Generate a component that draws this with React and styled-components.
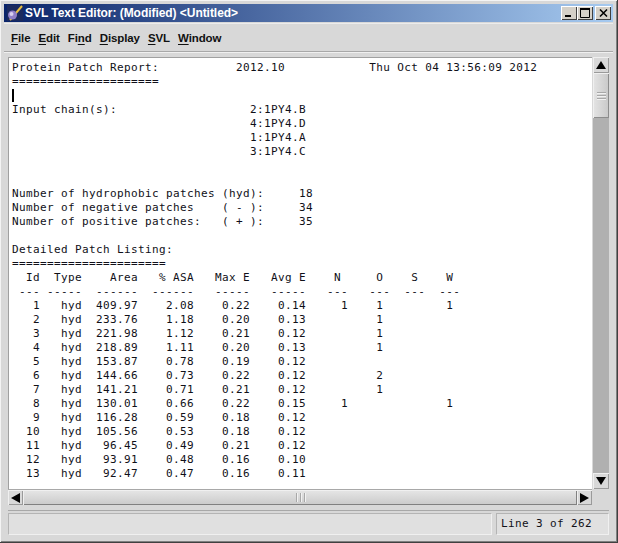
import { createGlobalStyle } from 'styled-components'
import styled from 'styled-components'

const GlobalStyle = createGlobalStyle`
  html, body {
    margin: 0;
    padding: 0;
    background: #d8d8d8;
  }
`

const Window = styled.div`
  width: 618px;
  height: 543px;
  box-sizing: border-box;
  display: flex;
  flex-direction: column;
  padding: 4px 4px 7px 4px;
  background: #d8d8d8;
  border-right: 1px solid #404040;
  border-bottom: 1px solid #404040;
  box-shadow: inset 1px 1px 0 #f4f4f4, inset -1px -1px 0 #808080;
`

const TitleBar = styled.div`
  height: 18px;
  flex: none;
  display: flex;
  align-items: center;
  padding: 0 2px 0 3px;
  background: linear-gradient(to right, #0a246a, #a6caf0);
`

const AppIcon = styled.svg`
  width: 16px;
  height: 16px;
  flex: none;
`

const Title = styled.div`
  flex: 1;
  margin-left: 2px;
  font: bold 12px 'Liberation Sans', sans-serif;
  letter-spacing: -0.05px;
  color: #fff;
  white-space: pre;
`

const CaptionButton = styled.div`
  width: 16px;
  height: 14px;
  margin-left: ${(props) => props.$gap || 0}px;
  background: #d4d0c8;
  box-shadow: inset 1px 1px 0 #fff, inset -1px -1px 0 #404040;
  display: flex;
  align-items: center;
  justify-content: center;
  svg {
    display: block;
  }
`

const MenuBar = styled.div`
  height: 29px;
  flex: none;
  display: flex;
  align-items: center;
  gap: 8px;
  padding: 0 0 0 7px;
  margin-top: 1px;
  border-top: 1px solid #ececec;
  border-bottom: 1px solid #a8a8a8;
  box-shadow: 0 1px 0 #f0f0f0;
  box-sizing: border-box;
`

const MenuItem = styled.div`
  font: bold 11.5px 'Liberation Sans', sans-serif;
  letter-spacing: -0.1px;
  color: #111;
  white-space: pre;
  span {
    text-decoration: underline;
    text-underline-offset: 2px;
  }
`

const Body = styled.div`
  flex: 1;
  min-height: 0;
  display: grid;
  grid-template-columns: 1fr 17px;
  grid-template-rows: 1fr 16px;
  margin: 5px 4px 0 4px;
  border-bottom: 1px solid #a8a8a8;
  padding-bottom: 5px;
`

const TextPane = styled.pre`
  margin: 0;
  overflow: hidden;
  background: #fff;
  border-top: 1px solid #a0a0a0;
  border-left: 1px solid #a0a0a0;
  padding: 3px 0 0 3px;
  font: 11px/14px 'DejaVu Sans Mono', monospace;
  letter-spacing: 0.38px;
  color: #101018;
  position: relative;
`

const Caret = styled.div`
  position: absolute;
  left: 3px;
  top: 31px;
  width: 2px;
  height: 13px;
  background: #000;
`

const VScroll = styled.div`
  display: flex;
  flex-direction: column;
  background: #b0b0b0;
  border-left: 1px solid #d8d8d8;
`

const HScroll = styled.div`
  display: flex;
  background: #c8c8c8;
  border-top: 1px solid #a8a8a8;
`

const Arrow = styled.div`
  flex: none;
  width: ${(props) => (props.$horizontal ? '15px' : '16px')};
  height: ${(props) => (props.$horizontal ? '15px' : '16px')};
  background: #d8d8d8;
  box-shadow: inset 1px 1px 0 #efefef, inset -1px -1px 0 #9a9a9a;
  display: flex;
  align-items: center;
  justify-content: center;
`

const VThumb = styled.div`
  flex: none;
  height: 45px;
  box-sizing: border-box;
  background: linear-gradient(to right, #e4e4e4, #c8c8c8);
  box-shadow: inset 1px 1px 0 #f0f0f0, inset -1px -1px 0 #8c8c8c;
  display: flex;
  flex-direction: column;
  align-items: center;
  justify-content: center;
  gap: 2px;
`

const VGrip = styled.div`
  width: 9px;
  height: 1px;
  background: #a8a8a8;
  box-shadow: 0 1px 0 #f2f2f2;
`

const VTrack = styled.div`
  flex: 1;
`

const HThumb = styled.div`
  flex: 1;
  background: linear-gradient(to bottom, #e6e6e6, #cacaca);
  box-shadow: inset 1px 1px 0 #f0f0f0, inset -1px -1px 0 #808080;
  display: flex;
  align-items: center;
  justify-content: center;
  gap: 3px;
`

const HGrip = styled.div`
  width: 1px;
  height: 9px;
  background: #a8a8a8;
  box-shadow: 1px 0 0 #f2f2f2;
`

const StatusBar = styled.div`
  flex: none;
  height: 22px;
  display: flex;
  gap: 4px;
  margin: 2px 4px 0 4px;
`

const StatusCell = styled.div`
  flex: ${(props) => (props.$fill ? 1 : 'none')};
  width: ${(props) => (props.$fill ? 'auto' : '113px')};
  box-sizing: border-box;
  background: #e0e0e0;
  border: 1px solid;
  border-color: #b4b4b4 #f0f0f0 #f0f0f0 #b4b4b4;
  padding-left: 4px;
  font: 11px/20px 'DejaVu Sans Mono', monospace;
  letter-spacing: 0.38px;
  color: #101018;
  white-space: pre;
`

const report = `Protein Patch Report:           2012.10            Thu Oct 04 13:56:09 2012
=====================

Input chain(s):                   2:1PY4.B
                                  4:1PY4.D
                                  1:1PY4.A
                                  3:1PY4.C


Number of hydrophobic patches (hyd):     18
Number of negative patches    ( - ):     34
Number of positive patches:   ( + ):     35

Detailed Patch Listing:
======================
  Id  Type    Area   % ASA   Max E   Avg E    N     O    S    W
 --- -----  ------  ------   -----   -----   ---   ---  ---  ---
   1   hyd  409.97    2.08    0.22    0.14     1    1         1
   2   hyd  233.76    1.18    0.20    0.13          1
   3   hyd  221.98    1.12    0.21    0.12          1
   4   hyd  218.89    1.11    0.20    0.13          1
   5   hyd  153.87    0.78    0.19    0.12
   6   hyd  144.66    0.73    0.22    0.12          2
   7   hyd  141.21    0.71    0.21    0.12          1
   8   hyd  130.01    0.66    0.22    0.15     1              1
   9   hyd  116.28    0.59    0.18    0.12
  10   hyd  105.56    0.53    0.18    0.12
  11   hyd   96.45    0.49    0.21    0.12
  12   hyd   93.91    0.48    0.16    0.10
  13   hyd   92.47    0.47    0.16    0.11`

const Triangle = ({ dir }) => {
  const points = {
    up: '5,1 10,9 0,9',
    down: '0,1 10,1 5,9',
    left: '0,5 9,0 9,10',
    right: '9,5 0,0 0,10',
  }
  return (
    <svg width="10" height="10" viewBox="0 0 10 10">
      <polygon points={points[dir]} fill="#000" />
    </svg>
  )
}

export default function App() {
  return (
    <Window>
      <GlobalStyle />
      <TitleBar>
        <AppIcon viewBox="0 0 16 16">
          <rect width="16" height="16" fill="#1b2a5e" />
          <path d="M3 15 L15 1" stroke="#e8c040" strokeWidth="2" />
          <circle cx="5.5" cy="10" r="4.5" fill="#8f7fc8" />
          <circle cx="4.5" cy="9" r="2" fill="#d8d0f0" />
        </AppIcon>
        <Title>SVL Text Editor: (Modified) &lt;Untitled&gt;</Title>
        <CaptionButton>
          <svg width="8" height="8" viewBox="0 0 8 8">
            <rect x="0" y="6" width="6" height="2" fill="#000" />
          </svg>
        </CaptionButton>
        <CaptionButton>
          <svg width="10" height="10" viewBox="0 0 10 10">
            <path d="M0.5 1.5 H9.5 V9.5 H0.5 Z" fill="none" stroke="#000" />
            <rect x="0" y="0" width="10" height="2" fill="#000" />
          </svg>
        </CaptionButton>
        <CaptionButton $gap={2}>
          <svg width="9" height="8" viewBox="0 0 9 8">
            <path d="M1 0.5 L8 7.5 M8 0.5 L1 7.5" stroke="#000" strokeWidth="1.5" />
          </svg>
        </CaptionButton>
      </TitleBar>
      <MenuBar>
        <MenuItem><span>F</span>ile</MenuItem>
        <MenuItem><span>E</span>dit</MenuItem>
        <MenuItem>Fi<span>n</span>d</MenuItem>
        <MenuItem><span>D</span>isplay</MenuItem>
        <MenuItem><span>S</span>VL</MenuItem>
        <MenuItem><span>W</span>indow</MenuItem>
      </MenuBar>
      <Body>
        <TextPane>
          {report}
          <Caret />
        </TextPane>
        <VScroll>
          <Arrow><Triangle dir="up" /></Arrow>
          <VThumb>
            <VGrip />
            <VGrip />
            <VGrip />
          </VThumb>
          <VTrack />
          <Arrow><Triangle dir="down" /></Arrow>
        </VScroll>
        <HScroll>
          <Arrow $horizontal><Triangle dir="left" /></Arrow>
          <HThumb>
            <HGrip />
            <HGrip />
            <HGrip />
          </HThumb>
          <Arrow $horizontal><Triangle dir="right" /></Arrow>
        </HScroll>
      </Body>
      <StatusBar>
        <StatusCell $fill />
        <StatusCell>Line 3 of 262</StatusCell>
      </StatusBar>
    </Window>
  )
}
